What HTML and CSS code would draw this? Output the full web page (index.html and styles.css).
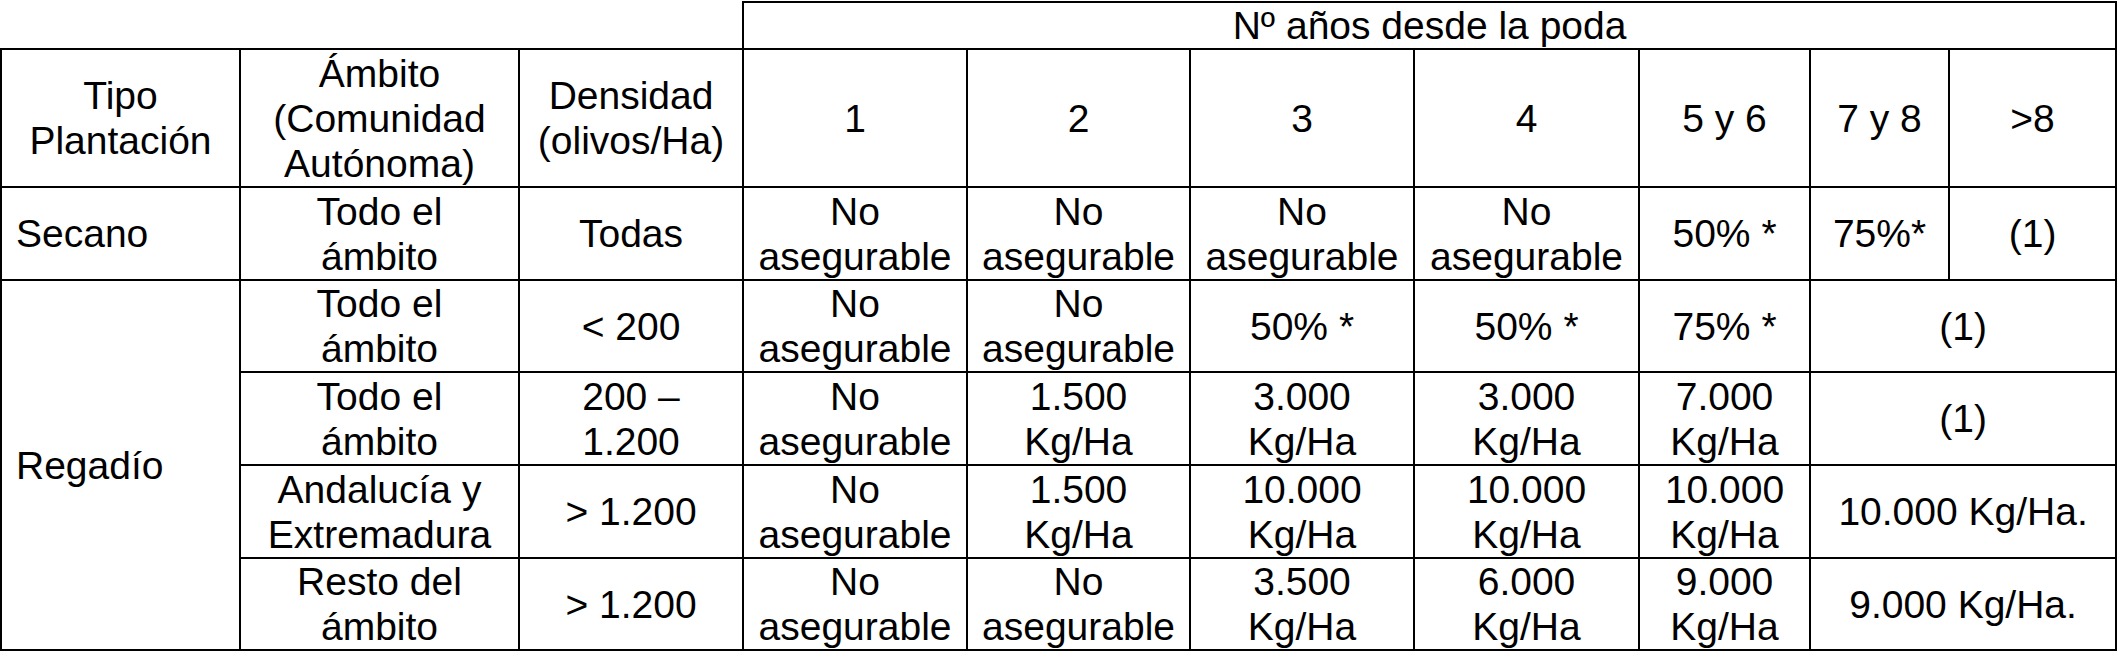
FILE: index.html
```html
<!DOCTYPE html>
<html lang="es">
<head>
<meta charset="utf-8">
<title>Tabla poda</title>
<link rel="stylesheet" href="styles.css">
</head>
<body>
<table class="grid">
  <colgroup>
    <col class="c-tipo">
    <col class="c-ambito">
    <col class="c-dens">
    <col class="c-y1">
    <col class="c-y2">
    <col class="c-y3">
    <col class="c-y4">
    <col class="c-y56">
    <col class="c-y78">
    <col class="c-y8">
  </colgroup>
  <tr class="r-top">
    <td class="blank" colspan="3"></td>
    <td colspan="7">Nº años desde la poda</td>
  </tr>
  <tr class="r-head">
    <td>Tipo<br>Plantación</td>
    <td>Ámbito<br>(Comunidad<br>Autónoma)</td>
    <td>Densidad<br>(olivos/Ha)</td>
    <td>1</td>
    <td>2</td>
    <td>3</td>
    <td>4</td>
    <td>5 y 6</td>
    <td>7 y 8</td>
    <td>&gt;8</td>
  </tr>
  <tr class="r-a">
    <td class="left">Secano</td>
    <td>Todo el<br>ámbito</td>
    <td>Todas</td>
    <td>No<br>asegurable</td>
    <td>No<br>asegurable</td>
    <td>No<br>asegurable</td>
    <td>No<br>asegurable</td>
    <td>50% *</td>
    <td>75%*</td>
    <td>(1)</td>
  </tr>
  <tr class="r-b">
    <td class="left" rowspan="4">Regadío</td>
    <td>Todo el<br>ámbito</td>
    <td>&lt; 200</td>
    <td>No<br>asegurable</td>
    <td>No<br>asegurable</td>
    <td>50% *</td>
    <td>50% *</td>
    <td>75% *</td>
    <td colspan="2">(1)</td>
  </tr>
  <tr class="r-c">
    <td>Todo el<br>ámbito</td>
    <td>200 –<br>1.200</td>
    <td>No<br>asegurable</td>
    <td>1.500<br>Kg/Ha</td>
    <td>3.000<br>Kg/Ha</td>
    <td>3.000<br>Kg/Ha</td>
    <td>7.000<br>Kg/Ha</td>
    <td colspan="2">(1)</td>
  </tr>
  <tr class="r-d">
    <td>Andalucía y<br>Extremadura</td>
    <td>&gt; 1.200</td>
    <td>No<br>asegurable</td>
    <td>1.500<br>Kg/Ha</td>
    <td>10.000<br>Kg/Ha</td>
    <td>10.000<br>Kg/Ha</td>
    <td>10.000<br>Kg/Ha</td>
    <td colspan="2">10.000 Kg/Ha.</td>
  </tr>
  <tr class="r-e">
    <td>Resto del<br>ámbito</td>
    <td>&gt; 1.200</td>
    <td>No<br>asegurable</td>
    <td>No<br>asegurable</td>
    <td>3.500<br>Kg/Ha</td>
    <td>6.000<br>Kg/Ha</td>
    <td>9.000<br>Kg/Ha</td>
    <td colspan="2">9.000 Kg/Ha.</td>
  </tr>
</table>
</body>
</html>
```

FILE: styles.css
```css
html, body {
  margin: 0;
  padding: 0;
  background: #ffffff;
}

body {
  padding-top: 1px;
}

.grid {
  border-collapse: collapse;
  table-layout: fixed;
  width: 2117px;
  font-family: "Liberation Sans", Arial, sans-serif;
  font-size: 39px;
  line-height: 45px;
  color: #000000;
}

.grid td {
  border: 2px solid #000000;
  padding: 0 2px;
  text-align: center;
  vertical-align: middle;
  white-space: nowrap;
}

.grid td.blank {
  border-top: hidden;
  border-left: hidden;
}

.grid td.left {
  text-align: left;
  padding-left: 14px;
}

.c-tipo { width: 239px; }
.c-ambito { width: 279px; }
.c-dens { width: 224px; }
.c-y1 { width: 224px; }
.c-y2 { width: 223px; }
.c-y3 { width: 224px; }
.c-y4 { width: 225px; }
.c-y56 { width: 171px; }
.c-y78 { width: 139px; }
.c-y8 { width: 167px; }

.r-top { height: 47px; }
.r-head { height: 138px; }
.r-a { height: 93px; }
.r-b { height: 92px; }
.r-c { height: 93px; }
.r-d { height: 93px; }
.r-e { height: 92px; }
```
